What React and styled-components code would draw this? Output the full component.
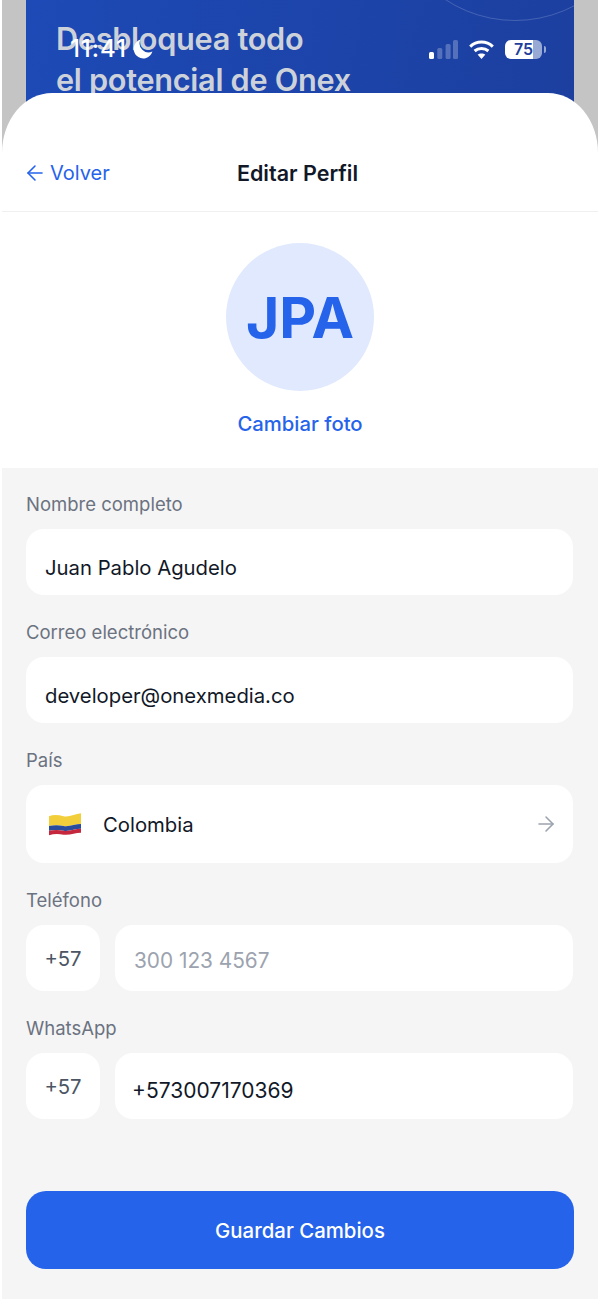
import React from 'react';
import styled, { createGlobalStyle } from 'styled-components';
import { ArrowLeft, ArrowRight } from 'lucide-react';

const GlobalStyle = createGlobalStyle`
	* {
		box-sizing: border-box;
	}
	html,
	body {
		margin: 0;
		background: #ffffff;
		font-family: Inter, 'Noto Sans', sans-serif;
	}
`;

function CellSignal() {
	return (
		<svg width="29" height="19" viewBox="0 0 29 19">
			<rect x="0" y="12" width="5" height="7" rx="1.5" fill="#ffffff" />
			<rect x="8.3" y="8" width="5" height="11" rx="1.5" fill="#ffffff" opacity="0.25" />
			<rect x="16.6" y="4" width="5" height="15" rx="1.5" fill="#ffffff" opacity="0.25" />
			<rect x="24" y="0" width="5" height="19" rx="1.5" fill="#ffffff" opacity="0.25" />
		</svg>
	);
}

function Wifi() {
	return (
		<svg width="25" height="19" viewBox="0 0 25 19" fill="none" stroke="#ffffff" strokeWidth="3">
			<path d="M1.2 6.6 C7.5 0.6 17.5 0.6 23.8 6.6" />
			<path d="M5.6 11 C9.5 7.6 15.5 7.6 19.4 11" />
			<path d="M12.5 19 L8.6 14.6 C10.6 13.1 14.4 13.1 16.4 14.6 Z" fill="#ffffff" stroke="none" />
		</svg>
	);
}

function Moon() {
	return (
		<svg width="20" height="20" viewBox="0 0 20 20">
			<path d="M7.5 0.6 A9.6 9.6 0 1 0 19.4 12.6 A9 9 0 0 1 7.5 0.6 Z" fill="#ffffff" />
		</svg>
	);
}

function ColombiaFlag() {
	return (
		<svg width="32" height="24" viewBox="0 0 33 24">
			<path d="M0 4 C5 2 10 3 15 4 C21 5 27 2 33 1 V12 C27 12 21 15 15 14 C10 13 5 13 0 14 Z" fill="#f2cf3a" />
			<path d="M0 14 C5 13 10 13 15 14 C21 15 27 12 33 12 V17 C27 17 21 20 15 19 C10 18 5 18 0 19 Z" fill="#2a4c9c" />
			<path d="M0 19 C5 18 10 18 15 19 C21 20 27 17 33 17 V21 C27 21 21 24 15 23 C10 22 5 22 0 23.5 Z" fill="#c5283d" />
		</svg>
	);
}

function App() {
	return (
		<Screen>
			<GlobalStyle />
			<StatusBar>
				<StatusLeft>
					<Clock>11:41</Clock>
					<Moon />
				</StatusLeft>
				<StatusRight>
					<CellSignal />
					<Wifi />
					<Battery>
						<BatteryBody>75</BatteryBody>
						<BatteryTip />
					</Battery>
				</StatusRight>
			</StatusBar>

			<Backdrop>
				<Promo>
					<PromoRing />
					<PromoTitle>
						Desbloquea todo
						<br />
						el potencial de Onex
					</PromoTitle>
				</Promo>
			</Backdrop>

			<Sheet>
				<Header>
					<BackLink>
						<ArrowLeft size={24} strokeWidth={1.6} />
						Volver
					</BackLink>
					<Title>Editar Perfil</Title>
				</Header>

				<AvatarSection>
					<Avatar>JPA</Avatar>
					<ChangePhoto>Cambiar foto</ChangePhoto>
				</AvatarSection>

				<Form>
					<Field>
						<Label>Nombre completo</Label>
						<Input $drop={10}>Juan Pablo Agudelo</Input>
					</Field>
					<Field>
						<Label>Correo electrónico</Label>
						<Input $drop={10}>developer@onexmedia.co</Input>
					</Field>
					<Field>
						<Label>País</Label>
						<CountrySelect>
							<ColombiaFlag />
							<CountryName>Colombia</CountryName>
							<ArrowRight size={24} strokeWidth={1.6} color="#9ca3af" />
						</CountrySelect>
					</Field>
					<Field>
						<Label>Teléfono</Label>
						<PhoneRow>
							<Prefix>+57</Prefix>
							<PhoneInput $drop={4} $placeholder>
								300 123 4567
							</PhoneInput>
						</PhoneRow>
					</Field>
					<Field>
						<Label>WhatsApp</Label>
						<PhoneRow>
							<Prefix>+57</Prefix>
							<PhoneInput $drop={9} $tight>
								+573007170369
							</PhoneInput>
						</PhoneRow>
					</Field>
					<SaveButton>Guardar Cambios</SaveButton>
				</Form>
			</Sheet>
		</Screen>
	);
}

export default App;

const Screen = styled.div`
	position: relative;
	width: 600px;
	height: 1299px;
	overflow: hidden;
	padding: 0 2px;
	background: #ffffff;
`;

const StatusBar = styled.div`
	position: absolute;
	top: 35px;
	left: 70px;
	right: 54px;
	z-index: 2;
	display: flex;
	align-items: center;
	justify-content: space-between;
	color: #ffffff;
`;

const StatusLeft = styled.div`
	display: flex;
	align-items: center;
	gap: 6px;
`;

const Clock = styled.span`
	font-size: 24px;
	font-weight: 500;
	line-height: 28px;
	letter-spacing: 0.9px;
`;

const StatusRight = styled.div`
	display: flex;
	align-items: center;
	gap: 11px;
`;

const Battery = styled.div`
	display: flex;
	align-items: center;
	gap: 2px;
`;

const BatteryBody = styled.div`
	width: 37px;
	height: 19px;
	border-radius: 6px;
	background: linear-gradient(to right, #ffffff 75%, rgba(255, 255, 255, 0.55) 75%);
	color: #1e3f9c;
	font-size: 16px;
	font-weight: 600;
	line-height: 19px;
	text-align: center;
`;

const BatteryTip = styled.div`
	width: 2px;
	height: 7px;
	border-radius: 0 2px 2px 0;
	background: rgba(255, 255, 255, 0.55);
`;

const Backdrop = styled.div`
	height: 160px;
	padding: 0 24px;
	background: #c4c4c4;
`;

const Promo = styled.div`
	position: relative;
	height: 100%;
	overflow: hidden;
	padding: 18px 30px 0;
	background: linear-gradient(100deg, #1d4ab6 0%, #1c3f9f 100%);
`;

const PromoRing = styled.div`
	position: absolute;
	top: -233px;
	right: -68px;
	width: 254px;
	height: 254px;
	border: 1px solid rgba(255, 255, 255, 0.18);
	border-radius: 50%;
`;

const PromoTitle = styled.div`
	color: #cdd2da;
	font-size: 30.7px;
	font-weight: 600;
	line-height: 41px;
	letter-spacing: -0.3px;
	white-space: nowrap;
`;

const Sheet = styled.div`
	position: relative;
	z-index: 1;
	margin-top: -67px;
	border-radius: 50px 50px 0 0 / 60px 60px 0 0;
	overflow: hidden;
	background: #ffffff;
`;

const Header = styled.div`
	position: relative;
	display: flex;
	align-items: center;
	justify-content: center;
	height: 119px;
	padding: 42px 5px 0 0;
	border-bottom: 1px solid #eef0f2;
`;

const BackLink = styled.div`
	position: absolute;
	left: 21px;
	top: 66px;
	display: flex;
	align-items: center;
	gap: 3px;
	color: #2563eb;
	font-size: 20px;
	line-height: 28px;
`;

const Title = styled.div`
	color: #111827;
	font-size: 21.5px;
	font-weight: 600;
	line-height: 28px;
`;

const AvatarSection = styled.div`
	display: flex;
	flex-direction: column;
	align-items: center;
	height: 256px;
	padding-top: 31px;
`;

const Avatar = styled.div`
	display: flex;
	align-items: center;
	justify-content: center;
	width: 148px;
	height: 148px;
	border-radius: 50%;
	background: #e0e9fd;
	color: #2563eb;
	font-size: 57px;
	font-weight: 700;
`;

const ChangePhoto = styled.div`
	margin-top: 19px;
	color: #2563eb;
	font-size: 20.3px;
	font-weight: 500;
	line-height: 28px;
`;

const Form = styled.div`
	display: flex;
	flex-direction: column;
	gap: 24px;
	height: 831px;
	padding: 23px 25px 0 24px;
	background: #f5f5f6;
`;

const Field = styled.div`
	display: flex;
	flex-direction: column;
	gap: 12px;
`;

const Label = styled.div`
	color: #6b7280;
	font-size: 18.5px;
	line-height: 26px;
`;

const Input = styled.div`
	display: flex;
	align-items: center;
	height: 66px;
	padding: ${({ $drop }) => $drop}px 19px 0;
	border-radius: 18px;
	background: #ffffff;
	color: #111827;
	font-size: 20.3px;
	white-space: nowrap;
`;

const CountrySelect = styled.div`
	display: flex;
	align-items: center;
	height: 78px;
	padding: 0 15px 0 23px;
	border-radius: 18px;
	background: #ffffff;
`;

const CountryName = styled.div`
	flex: 1;
	margin-left: 22px;
	color: #111827;
	font-size: 20.3px;
`;

const PhoneRow = styled.div`
	display: flex;
	gap: 15px;
`;

const PhoneInput = styled(Input)`
	flex: 1;
	padding-left: ${({ $tight }) => ($tight ? '17px' : '19px')};
	color: ${({ $placeholder }) => ($placeholder ? '#9ca3af' : '#111827')};
	font-size: ${({ $placeholder }) => ($placeholder ? '20.8px' : '21px')};
`;

const Prefix = styled.div`
	display: flex;
	align-items: center;
	justify-content: center;
	width: 74px;
	height: 66px;
	border-radius: 18px;
	background: #ffffff;
	color: #4b5563;
	font-size: 20.3px;
`;

const SaveButton = styled.button`
	height: 78px;
	margin: 48px -1px 0 0;
	border: none;
	border-radius: 20px;
	background: #2563eb;
	color: #ffffff;
	font-family: inherit;
	font-size: 20.4px;
	font-weight: 500;
`;
